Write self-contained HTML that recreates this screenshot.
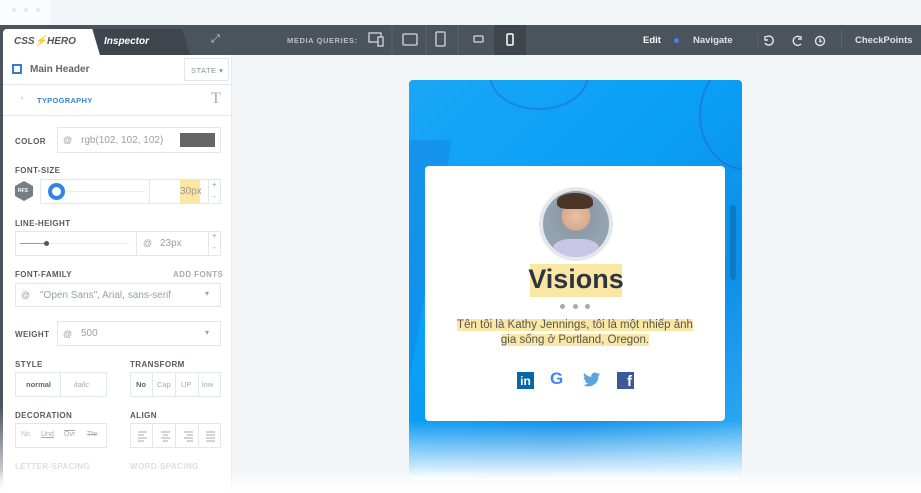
<!DOCTYPE html>
<html><head><meta charset="utf-8"><style>
*{margin:0;padding:0;box-sizing:border-box}
body{width:921px;height:493px;overflow:hidden;background:#f3f6f9;font-family:"Liberation Sans",sans-serif;position:relative}
.a{position:absolute}
.lbl{position:absolute;font-size:8px;font-weight:bold;color:#555b62;letter-spacing:.4px}
.box{position:absolute;border:1px solid #e3e6ea;background:#fff}
.t{position:absolute;font-size:10px;color:#9aa0a6}
.tb{color:#fff;font-size:9.5px;font-weight:bold;position:absolute}
</style></head><body>
<div class="a" style="left:0;top:0;width:50px;height:25px;background:#fbfcfd"></div>
<div class="a" style="left:12px;top:8px;width:4px;height:4px;background:#e6e8eb;border-radius:2px"></div>
<div class="a" style="left:24px;top:8px;width:4px;height:4px;background:#e6e8eb;border-radius:2px"></div>
<div class="a" style="left:36px;top:8px;width:4px;height:4px;background:#e6e8eb;border-radius:2px"></div>
<!-- toolbar -->
<div class="a" style="left:0;top:25px;width:921px;height:30px;background:#4b535c"></div>
<div class="a" style="left:94px;top:29px;width:96px;height:26px;background:#3e454d;clip-path:polygon(0 0,92% 0,100% 100%,4% 100%)"></div>
<div class="a" style="left:3px;top:29px;width:97px;height:26px;background:#fff;clip-path:polygon(0 0,92% 0,100% 100%,0 100%);border-radius:4px 0 0 0"></div>
<div class="a" style="left:14px;top:36px;font-size:10px;font-weight:bold;font-style:italic;color:#555">CSS⚡HERO</div>
<div class="a" style="left:104px;top:36px;font-size:10px;font-weight:bold;font-style:italic;color:#fff">Inspector</div>
<div class="a" style="left:211px;top:33px;color:#c9ced3;font-size:11px">⤢</div>
<div class="a" style="left:287px;top:36px;font-size:7.5px;color:#b9bfc5;letter-spacing:.6px;font-weight:bold">MEDIA QUERIES:</div>
<svg class="a" style="left:360px;top:25px" width="170" height="30">
<g fill="none" stroke="#d4d8dc" stroke-width="1.3">
<rect x="9" y="8" width="12" height="9"/><rect x="18" y="12" width="5" height="9" fill="#4b535c"/>
<rect x="43" y="9" width="14" height="11" rx="1"/><rect x="76" y="7" width="9" height="14" rx="1"/>
<rect x="114" y="11" width="9" height="6" rx="1"/></g>
<line x1="32" y1="0" x2="32" y2="30" stroke="#5b636c"/><line x1="66" y1="0" x2="66" y2="30" stroke="#5b636c"/><line x1="98" y1="0" x2="98" y2="30" stroke="#5b636c"/>
<rect x="134" y="0" width="32" height="30" fill="#3e454d"/>
<rect x="147" y="9" width="6" height="11" rx="1" fill="none" stroke="#fff" stroke-width="1.5"/>
</svg>
<div class="tb" style="left:643px;top:35px">Edit</div>
<div class="a" style="left:674px;top:38px;width:5px;height:5px;border-radius:3px;background:#4f7cf0"></div>
<div class="tb" style="left:693px;top:35px;color:#dfe3e6">Navigate</div>
<svg class="a" style="left:755px;top:30px" width="80" height="22">
<g fill="none" stroke="#e2e5e8" stroke-width="1.4">
<path d="M11 7a4.5 4.5 0 1 1-1 6M10 6v4h3"/><path d="M45 7a4.5 4.5 0 1 0 1 7M46 6v3h-3"/>
<circle cx="65" cy="11" r="4.5"/><path d="M65 8.5v3h2"/></g>
<line x1="3" y1="4" x2="3" y2="18" stroke="#5b636c"/></svg>
<div class="a" style="left:841px;top:30px;width:1px;height:18px;background:#5b636c"></div>
<div class="tb" style="left:855px;top:35px;color:#dfe3e6">CheckPoints</div>
<!-- left panel -->
<div class="a" style="left:0;top:55px;width:3px;height:438px;background:linear-gradient(#4b535c 80%,rgba(75,83,92,0))"></div>
<div class="a" style="left:3px;top:55px;width:229px;height:438px;background:#fff;border-right:1px solid #e8ebee"></div>
<div class="a" style="left:12px;top:64px;width:10px;height:10px;border:2px dashed #3a7bd5"></div>
<div class="a" style="left:30px;top:64px;font-size:10px;font-weight:bold;color:#666">Main Header</div>
<div class="box" style="left:184px;top:58px;width:45px;height:23px"></div>
<div class="a" style="left:191px;top:66px;font-size:7.5px;color:#8a9096;letter-spacing:.5px">STATE ▾</div>
<div class="a" style="left:3px;top:84px;width:229px;height:1px;background:#e3e6ea"></div>
<div class="a" style="left:21px;top:95px;font-size:7px;color:#999">‹</div>
<div class="a" style="left:37px;top:96px;font-size:7.5px;font-weight:bold;color:#3a84d6;letter-spacing:.3px">TYPOGRAPHY</div>
<div class="a" style="left:211px;top:90px;font-size:16px;color:#aaa;font-family:'Liberation Serif',serif">T</div>
<div class="a" style="left:3px;top:115px;width:229px;height:1px;background:#e3e6ea"></div>
<div class="lbl" style="left:15px;top:137px">COLOR</div>
<div class="box" style="left:57px;top:127px;width:164px;height:26px"></div>
<div class="t" style="left:63px;top:135px;font-size:9px">@</div>
<div class="t" style="left:81px;top:135px">rgb(102, 102, 102)</div>
<div class="a" style="left:180px;top:133px;width:35px;height:14px;background:#666"></div>
<div class="lbl" style="left:15px;top:166px">FONT-SIZE</div>
<div class="a" style="left:15px;top:181px;width:18px;height:20px;background:#777d84;clip-path:polygon(50% 0,100% 25%,100% 75%,50% 100%,0 75%,0 25%)"></div>
<div class="a" style="left:18px;top:188px;font-size:5px;color:#fff;font-weight:bold">RFS</div>
<div class="box" style="left:40px;top:179px;width:181px;height:25px"></div>
<div class="a" style="left:149px;top:180px;width:1px;height:23px;background:#e3e6ea"></div>
<div class="a" style="left:65px;top:191px;width:80px;height:1px;background:#eee"></div>
<div class="a" style="left:48px;top:183px;width:17px;height:17px;border-radius:50%;border:4px solid #2f86e8;background:#fff"></div>
<div class="a" style="left:180px;top:180px;width:20px;height:23px;background:#fbe7a4"></div>
<div class="t" style="left:180px;top:186px;color:#999">30px</div>
<div class="a" style="left:208px;top:180px;width:1px;height:23px;background:#e3e6ea"></div>
<div class="t" style="left:212px;top:180px;font-size:8px">+</div><div class="t" style="left:213px;top:192px;font-size:8px">-</div>
<div class="lbl" style="left:15px;top:219px">LINE-HEIGHT</div>
<div class="box" style="left:15px;top:231px;width:206px;height:25px"></div>
<div class="a" style="left:136px;top:232px;width:1px;height:23px;background:#e3e6ea"></div>
<div class="a" style="left:20px;top:243px;width:110px;height:1px;background:#eee"></div>
<div class="a" style="left:20px;top:243px;width:26px;height:1px;background:#999"></div>
<div class="a" style="left:44px;top:241px;width:5px;height:5px;border-radius:50%;background:#555"></div>
<div class="t" style="left:143px;top:238px;font-size:9px">@</div>
<div class="t" style="left:160px;top:238px">23px</div>
<div class="a" style="left:208px;top:232px;width:1px;height:23px;background:#e3e6ea"></div>
<div class="t" style="left:212px;top:231px;font-size:8px">+</div><div class="t" style="left:213px;top:243px;font-size:8px">-</div>
<div class="lbl" style="left:15px;top:270px">FONT-FAMILY</div>
<div class="lbl" style="left:173px;top:270px;color:#aaa">ADD FONTS</div>
<div class="box" style="left:15px;top:283px;width:206px;height:24px"></div>
<div class="t" style="left:21px;top:290px;font-size:9px">@</div>
<div class="t" style="left:40px;top:290px">"Open Sans", Arial, sans-serif</div>
<div class="t" style="left:205px;top:289px;font-size:8px">▾</div>
<div class="lbl" style="left:15px;top:330px">WEIGHT</div>
<div class="box" style="left:57px;top:321px;width:164px;height:25px"></div>
<div class="t" style="left:63px;top:329px;font-size:9px">@</div>
<div class="t" style="left:81px;top:328px">500</div>
<div class="t" style="left:205px;top:328px;font-size:8px">▾</div>
<div class="lbl" style="left:15px;top:360px">STYLE</div>
<div class="lbl" style="left:130px;top:360px">TRANSFORM</div>
<div class="box" style="left:15px;top:372px;width:92px;height:25px"></div>
<div class="a" style="left:60px;top:372px;width:1px;height:25px;background:#e3e6ea"></div>
<div class="a" style="left:26px;top:380px;font-size:7.5px;font-weight:bold;color:#666">normal</div>
<div class="a" style="left:74px;top:380px;font-size:7.5px;font-style:italic;color:#aaa">italic</div>
<div class="box" style="left:130px;top:372px;width:91px;height:25px"></div>
<div class="a" style="left:152px;top:372px;width:1px;height:25px;background:#e3e6ea"></div>
<div class="a" style="left:175px;top:372px;width:1px;height:25px;background:#e3e6ea"></div>
<div class="a" style="left:198px;top:372px;width:1px;height:25px;background:#e3e6ea"></div>
<div class="a" style="left:136px;top:380px;font-size:7.5px;font-weight:bold;color:#666">No</div>
<div class="a" style="left:157px;top:380px;font-size:7.5px;color:#aaa">Cap</div>
<div class="a" style="left:181px;top:380px;font-size:7.5px;color:#aaa">UP</div>
<div class="a" style="left:202px;top:380px;font-size:7.5px;color:#aaa">low</div>
<div class="lbl" style="left:15px;top:411px">DECORATION</div>
<div class="lbl" style="left:130px;top:411px">ALIGN</div>
<div class="box" style="left:15px;top:423px;width:92px;height:25px"></div>
<div class="a" style="left:21px;top:431px;font-size:7px;color:#bbb">No</div>
<div class="a" style="left:41px;top:431px;font-size:7px;color:#aaa;text-decoration:underline">Und</div>
<div class="a" style="left:64px;top:431px;font-size:7px;color:#aaa;text-decoration:overline">Ovr</div>
<div class="a" style="left:87px;top:431px;font-size:7px;color:#aaa;text-decoration:line-through">Thr</div>
<div class="box" style="left:130px;top:423px;width:91px;height:25px"></div>
<svg class="a" style="left:130px;top:423px" width="91" height="25"><g stroke="#aaa" stroke-width="1">
<path d="M8 9h9M8 12h6M8 15h9M8 18h6M31 9h9M33 12h5M31 15h9M33 18h5M54 9h9M57 12h6M54 15h9M57 18h6M76 9h9M76 12h9M76 15h9M76 18h9"/>
<path d="M22.5 0v25M45.5 0v25M68.5 0v25" stroke="#e3e6ea"/></g></svg>
<div class="lbl" style="left:15px;top:462px;color:#ddd">LETTER-SPACING</div>
<div class="lbl" style="left:130px;top:462px;color:#ddd">WORD-SPACING</div>
<!-- preview -->
<div class="a" style="left:409px;top:80px;width:333px;height:400px;border-radius:4px;overflow:hidden;background:linear-gradient(135deg,#1aa6f5 0%,#0aa0f6 40%,#0d8fe8 70%,#36aef5 100%)">
<div class="a" style="left:80px;top:-40px;width:100px;height:70px;border:2px solid #2a56c9;border-radius:50%;opacity:.4"></div>
<div class="a" style="left:290px;top:-20px;width:90px;height:110px;border:2px solid #2a56c9;border-radius:50%;opacity:.4"></div>
<div class="a" style="left:-30px;top:60px;width:50px;height:260px;background:rgba(20,80,200,.18);transform:skewX(-10deg)"></div>
<div class="a" style="left:321px;top:125px;width:6px;height:75px;background:#0a7cc6;border-radius:3px"></div>
<div class="a" style="left:0;top:340px;width:333px;height:60px;background:linear-gradient(rgba(255,255,255,0),#fff)"></div>
</div>
<div class="a" style="left:0;top:470px;width:921px;height:23px;background:linear-gradient(rgba(243,246,249,0),#fff)"></div>
<div class="a" style="left:425px;top:166px;width:300px;height:255px;background:#fff;border-radius:4px"></div>
<div class="a" style="left:539px;top:187px;width:74px;height:74px;border-radius:50%;background:#e4e8ec"></div>
<div class="a" style="left:543px;top:191px;width:66px;height:66px;border-radius:50%;background:radial-gradient(circle at 50% 38%,#e9c2a8 0,#d8a98c 14px,#8c9aa8 15px,#93a3b0 30px);overflow:hidden">
<div class="a" style="left:14px;top:2px;width:36px;height:16px;background:#4a3526;border-radius:50% 50% 30% 30%"></div>
<div class="a" style="left:10px;top:48px;width:46px;height:22px;background:#c9c6e6;border-radius:40% 40% 0 0"></div></div>
<div class="a" style="left:530px;top:264px;width:92px;height:33px;background:#fbe7a4"></div>
<div class="a" style="left:520px;top:264px;width:112px;text-align:center;font-size:27px;font-weight:bold;color:#2e3440">Visions</div>
<div class="a" style="left:560px;top:304px;width:5px;height:5px;border-radius:50%;background:#aaa"></div>
<div class="a" style="left:573px;top:304px;width:5px;height:5px;border-radius:50%;background:#aaa"></div>
<div class="a" style="left:585px;top:304px;width:5px;height:5px;border-radius:50%;background:#aaa"></div>
<div class="a" style="left:425px;top:318px;width:300px;text-align:center;font-size:11.5px;line-height:14.5px;color:#555"><span style="background:#fbe7a4">Tên tôi là Kathy Jennings, tôi là một nhiếp ảnh<br>gia sống ở Portland, Oregon.</span></div>
<div class="a" style="left:517px;top:372px;width:17px;height:17px;background:#0a66a8;color:#fff;font-size:12px;font-weight:bold;text-align:center;line-height:18px">in</div>
<div class="a" style="left:550px;top:369px;font-size:17px;font-weight:bold;color:#4285f4">G</div>
<svg class="a" style="left:583px;top:372px" width="18" height="16"><path d="M17 2c-.6.3-1.3.5-2 .6.7-.4 1.3-1.1 1.5-1.9-.7.4-1.4.7-2.2.9A3.5 3.5 0 0 0 8.4 4.8 10 10 0 0 1 1.2 1.1a3.5 3.5 0 0 0 1.1 4.7c-.6 0-1.1-.2-1.6-.4 0 1.7 1.2 3.1 2.8 3.4-.5.2-1.1.2-1.6.1.5 1.4 1.7 2.4 3.3 2.4A7 7 0 0 1 0 12.8 10 10 0 0 0 15.4 4.4V4c.7-.5 1.2-1.1 1.6-2z" fill="#5aa4e0"/></svg>
<div class="a" style="left:617px;top:372px;width:17px;height:17px;background:#3b5998;color:#fff;font-size:15px;font-weight:bold;text-align:right;padding-right:2px;line-height:20px;overflow:hidden">f</div>
</body></html>
